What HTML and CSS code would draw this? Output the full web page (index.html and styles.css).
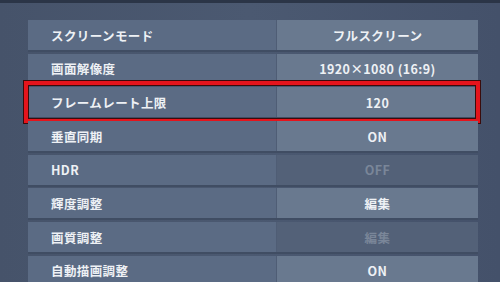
FILE: index.html
```html
<!DOCTYPE html>
<html lang="ja">
<head>
<meta charset="utf-8">
<link rel="stylesheet" href="styles.css">
</head>
<body>
<div class="screen">
  <div class="topbar"></div>
  <div class="list">
    <div class="row"><div class="label">スクリーンモード</div><div class="value">フルスクリーン</div></div>
    <div class="row"><div class="label">画面解像度</div><div class="value">1920×1080 (16:9)</div></div>
    <div class="row selected"><div class="label">フレームレート上限</div><div class="value">120</div></div>
    <div class="row"><div class="label">垂直同期</div><div class="value">ON</div></div>
    <div class="row"><div class="label">HDR</div><div class="value disabled">OFF</div></div>
    <div class="row"><div class="label">輝度調整</div><div class="value">編集</div></div>
    <div class="row"><div class="label">画質調整</div><div class="value disabled">編集</div></div>
    <div class="row"><div class="label">自動描画調整</div><div class="value">ON</div></div>
  </div>
</div>
</body>
</html>
```
FILE: styles.css
```css
html, body {
  margin: 0;
  padding: 0;
}
body {
  width: 500px;
  height: 282px;
  overflow: hidden;
  background: #48566d;
  font-family: "Noto Sans CJK JP", "Noto Sans", sans-serif;
  color: #eef1f5;
}
.screen {
  width: 500px;
  height: 282px;
  background: linear-gradient(90deg, #46536a 0%, #4b5971 50%, #44516a 100%);
}
.topbar {
  height: 3px;
  background: #2b3547;
}
.list {
  padding: 17px 22px 0 28px;
  display: flex;
  flex-direction: column;
  gap: 3.7px;
}
.row {
  position: relative;
  display: grid;
  grid-template-columns: 248px 1fr;
  column-gap: 1px;
  height: 30px;
  background: #4f5d75;
  box-shadow: 0 2px 0 #404d63;
}
.label, .value {
  display: flex;
  align-items: center;
  font-size: 12.5px;
  font-weight: 700;
  letter-spacing: 0.4px;
}
.label {
  background: #5b6b84;
  padding-left: 23px;
}
.value {
  background: #69798f;
  justify-content: center;
}
.value.disabled {
  background: #536178;
  color: #7a8699;
}
.selected::after {
  content: "";
  position: absolute;
  left: -4px;
  right: -2px;
  top: -6px;
  bottom: -6px;
  border: 4px solid #e5141c;
  box-shadow: 0 0 0 1px #3a0c0c, inset 0 0 0 1px #3a0c0c;
  pointer-events: none;
}
```
